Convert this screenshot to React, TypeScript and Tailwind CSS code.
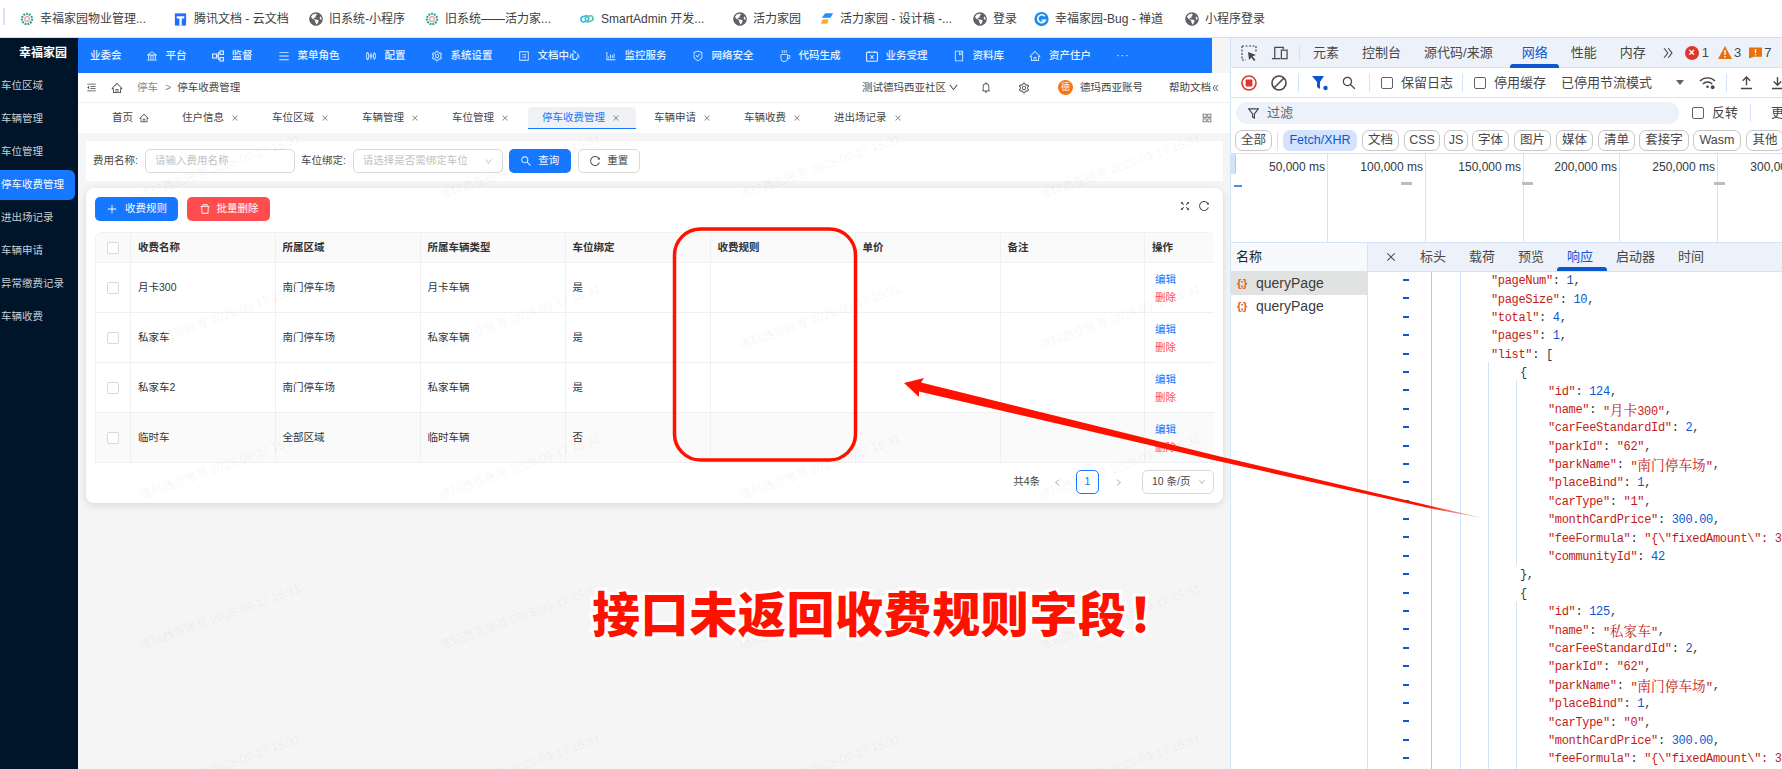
import React from 'react';
import {
  AiOutlineBank, AiOutlineMenu, AiOutlineSliders, AiOutlineSetting, AiOutlineProfile,
  AiOutlineBarChart, AiOutlineSafetyCertificate, AiOutlineCoffee, AiOutlineBook, AiOutlineHome,
  AiOutlineMenuFold, AiOutlineBell, AiOutlineDown, AiOutlineAppstore, AiOutlineClose, AiOutlineSearch, AiOutlineReload,
  AiOutlinePlus, AiOutlineDelete, AiOutlineFullscreen, AiOutlineLeft, AiOutlineRight, AiOutlineDoubleLeft, AiOutlineDoubleRight
} from 'react-icons/ai';
import { FaGlobeAmericas } from 'react-icons/fa';

const Flower = () => <svg viewBox="0 0 16 16" className="w-[14px] h-[16px] shrink-0">
    <circle cx="8" cy="8" r="5.8" fill="none" stroke="#2a9d8f" strokeWidth="2.6" strokeDasharray="2 1.2" />
    <circle cx="8" cy="8" r="2.6" fill="none" stroke="#e2a0a0" strokeWidth="1.4" />
  </svg>;
const Globe = () => <FaGlobeAmericas className="w-[14px] h-[14px] shrink-0 text-[#5f6368]" />;
const TencentDoc = () => <svg viewBox="0 0 16 16" className="w-[15px] h-[16px] shrink-0">
    <path d="M2 2h12v13H2z" fill="#1e6fff" />
    <path d="M4 5h8v2.4H9.3V15H6.8V7.4H4z" fill="#fff" />
  </svg>;
const SmartIcon = () => <svg viewBox="0 0 16 16" className="w-[16px] h-[14px] shrink-0">
    <rect x="1" y="5" width="9" height="6" rx="3" fill="none" stroke="#2db7f5" strokeWidth="1.8" transform="rotate(-20 5 8)" />
    <rect x="6" y="5" width="9" height="6" rx="3" fill="none" stroke="#52c4a0" strokeWidth="1.8" transform="rotate(-20 10 8)" />
  </svg>;
const DesignIcon = () => <svg viewBox="0 0 16 16" className="w-[14px] h-[15px] shrink-0">
    <path d="M6 2h9l-3 5H2z" fill="#1e8fff" />
    <path d="M3 9h7l-2 5H1z" fill="#ffa726" />
  </svg>;
const ZentaoIcon = () => <svg viewBox="0 0 16 16" className="w-[15px] h-[16px] shrink-0">
    <circle cx="8" cy="8" r="7.6" fill="#1a8cf0" />
    <path d="M11.5 5A4.2 4.2 0 1 0 12 9.5H8.2" fill="none" stroke="#fff" strokeWidth="1.8" />
  </svg>;

const SuperviseIcon = ({ className }: { className?: string }) => <svg viewBox="0 0 12 12" className={className} fill="none" stroke="currentColor" strokeWidth="1.1">
    <rect x="0.6" y="4" width="4" height="4" />
    <rect x="8" y="1" width="3.4" height="3.4" />
    <rect x="8" y="7.6" width="3.4" height="3.4" />
    <path d="M4.6 6H6.3V2.7H8M6.3 6v3.3H8" />
  </svg>;
const AcceptIcon = ({ className }: { className?: string }) => <svg viewBox="0 0 12 12" className={className} fill="none" stroke="currentColor" strokeWidth="1">
    <path d="M.6 2.2h10.8v9H.6zM3.2 1v2M8.8 1v2M4.4 5l3.2 4M7.6 5L4.4 9" />
  </svg>;

const bookmarks: [React.ReactNode, string, string][] = [
  [<Flower />, '幸福家园物业管理...', 'w-[153px]'],
  [<TencentDoc />, '腾讯文档 - 云文档', 'w-[136px]'],
  [<Globe />, '旧系统-小程序', 'w-[116px]'],
  [<Flower />, '旧系统——活力家...', 'w-[154px]'],
  [<SmartIcon />, 'SmartAdmin 开发...', 'w-[154px]'],
  [<Globe />, '活力家园', 'w-[87px]'],
  [<DesignIcon />, '活力家园 - 设计稿 -...', 'w-[153px]'],
  [<Globe />, '登录', 'w-[61px]'],
  [<ZentaoIcon />, '幸福家园-Bug - 禅道', 'w-[151px]'],
  [<Globe />, '小程序登录', 'w-[90px]'],
];

const sideItems = ['车位区域', '车辆管理', '车位管理', '停车收费管理', '进出场记录', '车辆申请', '异常缴费记录', '车辆收费'];

const navItems: [React.ElementType, string][] = [
  [AiOutlineBank, '平台'],
  [SuperviseIcon, '监督'],
  [AiOutlineMenu, '菜单角色'],
  [AiOutlineSliders, '配置'],
  [AiOutlineSetting, '系统设置'],
  [AiOutlineProfile, '文档中心'],
  [AiOutlineBarChart, '监控服务'],
  [AiOutlineSafetyCertificate, '网络安全'],
  [AiOutlineCoffee, '代码生成'],
  [AcceptIcon, '业务受理'],
  [AiOutlineBook, '资料库'],
  [AiOutlineHome, '资产住户'],
];

const tabs = ['住户信息', '车位区域', '车辆管理', '车位管理', '停车收费管理', '车辆申请', '车辆收费', '进出场记录'];

const rows = [
  ['月卡300', '南门停车场', '月卡车辆', '是'],
  ['私家车', '南门停车场', '私家车辆', '是'],
  ['私家车2', '南门停车场', '私家车辆', '是'],
  ['临时车', '全部区域', '临时车辆', '否'],
];

const gridCols = 'grid grid-cols-[35px_144.5px_145px_145px_145px_145px_145px_144.5px_69px]';
const cell = 'flex items-center px-[7px] border-r border-[#f0f0f0] last:border-r-0';

const Check = () => <span className="block w-[12px] h-[12px] rounded-[2px] border border-[#d9d9d9] bg-white" />;

const Table = () => <div className="mx-[9px] mt-[11px] w-[1119px] rounded-t-[6px] border-l border-t border-[#f0f0f0] text-[10.5px] text-[#333]">
    <div className={`${gridCols} h-[30px] bg-[#fafafa] border-b border-[#f0f0f0] font-bold`}>
      <div className={`${cell} justify-center`}><Check /></div>
      {['收费名称', '所属区域', '所属车辆类型', '车位绑定', '收费规则', '单价', '备注', '操作'].map(h => <div key={h} className={cell}>{h}</div>)}
    </div>
    {rows.map((r, i) => <div key={i} className={`${gridCols} h-[50px] border-b border-[#f0f0f0] ${i === 3 ? 'bg-[#fafafa]' : ''}`}>
        <div className={`${cell} justify-center`}><Check /></div>
        {r.map((v, j) => <div key={j} className={cell}>{v}</div>)}
        <div className={cell} />
        <div className={cell} />
        <div className={cell} />
        <div className={`${cell} flex-col !items-start justify-center pl-[10px] leading-[18px]`}>
          <span className="text-[#1677ff]">编辑</span>
          <span className="text-[#ff4d4f]">删除</span>
        </div>
      </div>)}
  </div>;

const App2 = () => <div className="relative flex w-[1230px] shrink-0 bg-[#f5f5f5]">
    <aside className="w-[78px] shrink-0 bg-[#001529] text-[10.5px] text-[#c9ced4]">
      <div className="h-[30px] pl-[19px] flex items-center text-[12px] font-bold text-white">幸福家园</div>
      <div className="mt-[3px] flex flex-col">
        {sideItems.map(s => <div key={s} className={`h-[30px] mb-[3px] mr-[3px] pl-px flex items-center ${s === '停车收费管理' ? 'bg-[#1677ff] text-white rounded-r-[6px]' : ''}`}>{s}</div>)}
      </div>
    </aside>
    <main className="flex-1 flex flex-col min-w-0">
      <nav className="w-[1134px] h-[35px] bg-[#1677ff] flex items-center pl-[12px] gap-[25px] text-[10.5px] font-medium text-white/90">
        <span className="mr-[-1px]">业委会</span>
        {navItems.map(([Icon, t]) => <span key={t} className="flex items-center gap-[8px]"><Icon className="w-[12px] h-[12px]" />{t}</span>)}
        <span className="tracking-[1px]">···</span>
      </nav>
      <div className="h-[30px] bg-white border-b border-[#f0f0f0] flex items-center pl-[8px] pr-[10px] text-[10.5px] text-[#444]">
        <AiOutlineMenuFold className="w-[11px] h-[11px]" />
        <AiOutlineHome className="ml-[14px] w-[12px] h-[12px]" />
        <span className="ml-[14px] text-[#888]">停车</span>
        <span className="ml-[7px] text-[#888]">&gt;</span>
        <span className="ml-[6px]">停车收费管理</span>
        <span className="ml-auto">测试德玛西亚社区</span>
        <AiOutlineDown className="ml-[2px] w-[11px] h-[11px]" />
        <AiOutlineBell className="ml-[21px] w-[12px] h-[13px]" />
        <AiOutlineSetting className="ml-[26px] w-[12px] h-[12px]" />
        <span className="ml-[28px] w-[15px] h-[15px] rounded-full bg-[#f5740f] text-white text-[9px] flex items-center justify-center">德</span>
        <span className="ml-[7px]">德玛西亚账号</span>
        <span className="ml-[26px]">帮助文档</span>
        <AiOutlineDoubleLeft className="w-[9px] h-[10px]" />
      </div>
      <div className="h-[30px] bg-white flex items-center text-[10.5px] text-[#444] pl-[34px] pr-[17px]">
        <span className="flex items-center gap-[6px] w-[70px]">首页<AiOutlineHome className="w-[10px] h-[10px]" /></span>
        {tabs.map(t => {
          const active = t === '停车收费管理';
          return <span key={t} className={`flex items-center gap-[7px] h-[22px] ${active ? 'bg-[#eff1f5] text-[#1677ff] border-b border-[#1677ff] rounded-t-[4px] pl-[14px] pr-[16px] ml-[-14px] mr-[18px]' : 'mr-[33px]'}`}>
              {t}<AiOutlineClose className="w-[8px] h-[8px] text-[#777]" />
            </span>;
        })}
        <AiOutlineAppstore className="ml-auto w-[12px] h-[12px] text-[#666]" />
      </div>
      <div className="mt-[8px] ml-[8px] w-[1137px] h-[40px] bg-white flex items-center pl-[7px] text-[10.5px] text-[#444]">
        <span className="mr-[7px]">费用名称:</span>
        <span className="w-[150px] h-[24px] rounded-[5px] border border-[#d9d9d9] flex items-center px-[9px] text-[#bfbfbf]">请输入费用名称</span>
        <span className="ml-[6px] mr-[7px]">车位绑定:</span>
        <span className="w-[150px] h-[24px] rounded-[5px] border border-[#d9d9d9] flex items-center px-[9px] text-[#bfbfbf]">请选择是否需绑定车位<AiOutlineDown className="ml-auto w-[9px] h-[9px]" /></span>
        <span className="ml-[6px] w-[62px] h-[24px] rounded-[5px] bg-[#1677ff] text-white flex items-center justify-center gap-[6px]"><AiOutlineSearch className="w-[12px] h-[12px]" />查询</span>
        <span className="ml-[7px] w-[62px] h-[24px] rounded-[5px] border border-[#d9d9d9] bg-white flex items-center justify-center gap-[6px]"><AiOutlineReload className="w-[12px] h-[12px]" />重置</span>
      </div>
      <section className="mt-[7px] ml-[8px] w-[1137px] h-[315px] bg-white rounded-[8px] shadow-[0_2px_8px_rgba(0,0,0,0.12)] pt-[9px]">
        <div className="flex items-center pl-[9px] pr-[13px] text-[10.5px]">
          <span className="w-[83px] h-[24px] rounded-[5px] bg-[#1677ff] text-white flex items-center justify-center gap-[7px]"><AiOutlinePlus className="w-[12px] h-[12px]" />收费规则</span>
          <span className="ml-[9px] w-[83px] h-[24px] rounded-[5px] bg-[#ff4d4f] text-white flex items-center justify-center gap-[6px]"><AiOutlineDelete className="w-[12px] h-[12px]" />批量删除</span>
          <AiOutlineFullscreen className="ml-auto self-start mt-[3px] w-[12px] h-[12px] text-[#444]" />
          <AiOutlineReload className="ml-[7px] self-start mt-[3px] w-[12px] h-[12px] text-[#444]" />
        </div>
        <Table />
        <div className="mt-[7px] pr-[9px] flex items-center justify-end text-[10.5px] text-[#444] h-[24px]">
          <span>共4条</span>
          <AiOutlineLeft className="ml-[13px] w-[9px] h-[9px] text-[#aaa]" />
          <span className="ml-[14px] w-[23px] h-[24px] rounded-[5px] border border-[#1677ff] text-[#1677ff] flex items-center justify-center">1</span>
          <AiOutlineRight className="ml-[15px] w-[9px] h-[9px] text-[#aaa]" />
          <span className="ml-[19px] w-[72px] h-[24px] rounded-[5px] border border-[#d9d9d9] flex items-center pl-[9px] pr-[7px]">10 条/页<AiOutlineDown className="ml-auto w-[8px] h-[8px] text-[#aaa]" /></span>
        </div>
      </section>
    </main>
    <Watermarks />
  </div>;

const Watermarks = () => <div className="absolute left-[78px] top-0 w-[1152px] h-[731px] overflow-hidden pointer-events-none">
    <div className="ml-[-8px] mt-[54px] grid grid-cols-[repeat(4,300px)] auto-rows-[150px] w-[1200px]">
      {Array.from({ length: 20 }).map((_, i) => <div key={i} className="flex items-center justify-center">
          <span className="rotate-[-20deg] whitespace-nowrap text-[12px] text-black/[0.06]">德玛西亚账号 2025-09-17 15:31</span>
        </div>)}
    </div>
  </div>;

const Sep = ({ className = '' }: { className?: string }) => <span className={`w-px h-[18px] bg-[#d3e3fd] shrink-0 ${className}`} />;
const DtCheck = () => <span className="block w-[12px] h-[12px] rounded-[2px] border border-[#5f6368] shrink-0" />;

const chips: [string, string][] = [
  ['文档', 'w-[37px] mr-[5px]'], ['CSS', 'w-[36px] mr-[4px]'], ['JS', 'w-[24px] mr-[4px]'], ['字体', 'w-[37px] mr-[5px]'], ['图片', 'w-[37px] mr-[5px]'],
  ['媒体', 'w-[37px] mr-[5px]'], ['清单', 'w-[37px] mr-[4px]'], ['套接字', 'w-[50px] mr-[4px]'], ['Wasm', 'w-[48px] mr-[5px]'], ['其他', 'w-[38px]'],
];

const gridLabels: [string, string][] = [
  ['50,000 ms', 'left-[96px]'], ['100,000 ms', 'left-[194px]'], ['150,000 ms', 'left-[292px]'],
  ['200,000 ms', 'left-[388px]'], ['250,000 ms', 'left-[486px]'], ['300,000 ms', 'left-[584px]'],
];

type Part = string | { n: string };
const q = (s: string) => `"${s}"`;
const code: [number, Part[]][] = [
  [0, [q('pageNum'), ': ', { n: '1' }, ',']],
  [0, [q('pageSize'), ': ', { n: '10' }, ',']],
  [0, [q('total'), ': ', { n: '4' }, ',']],
  [0, [q('pages'), ': ', { n: '1' }, ',']],
  [0, [q('list'), ': [']],
  [1, ['{']],
  [2, [q('id'), ': ', { n: '124' }, ',']],
  [2, [q('name'), ': ', q('月卡300'), ',']],
  [2, [q('carFeeStandardId'), ': ', { n: '2' }, ',']],
  [2, [q('parkId'), ': ', q('62'), ',']],
  [2, [q('parkName'), ': ', q('南门停车场'), ',']],
  [2, [q('placeBind'), ': ', { n: '1' }, ',']],
  [2, [q('carType'), ': ', q('1'), ',']],
  [2, [q('monthCardPrice'), ': ', { n: '300.00' }, ',']],
  [2, [q('feeFormula'), ': ', '"{\\"fixedAmount\\": 3']],
  [2, [q('communityId'), ': ', { n: '42' }]],
  [1, ['},']],
  [1, ['{']],
  [2, [q('id'), ': ', { n: '125' }, ',']],
  [2, [q('name'), ': ', q('私家车'), ',']],
  [2, [q('carFeeStandardId'), ': ', { n: '2' }, ',']],
  [2, [q('parkId'), ': ', q('62'), ',']],
  [2, [q('parkName'), ': ', q('南门停车场'), ',']],
  [2, [q('placeBind'), ': ', { n: '1' }, ',']],
  [2, [q('carType'), ': ', q('0'), ',']],
  [2, [q('monthCardPrice'), ': ', { n: '300.00' }, ',']],
  [2, [q('feeFormula'), ': ', '"{\\"fixedAmount\\": 3']],
];

// CJK runs stay at the wider size, latin uses the narrow mono
const renderStr = (s: string) => s.split(/([\u4e00-\u9fa5]+)/).map((p, i) => /[\u4e00-\u9fa5]/.test(p)
  ? <span key={i} className="text-[13.7px] tracking-normal font-['Noto_Serif_CJK_SC','Noto_Sans_CJK_SC',sans-serif]">{p}</span>
  : p);

const CodeLine = ({ indent, parts }: { indent: number; parts: Part[] }) => <div className={`h-[18.4px] flex items-center whitespace-pre ${indent === 0 ? 'pl-[123px]' : indent === 1 ? 'pl-[152px]' : 'pl-[180px]'}`}>
    {parts.map((p, i) => {
      if (typeof p !== 'string') return <span key={i} className="text-[#0b57d0]">{p.n}</span>;
      const punct = /^[:,\s\[\]{}]+$/.test(p);
      return <span key={i} className={punct ? 'text-[#303942]' : 'text-[#c41a16]'}>{renderStr(p)}</span>;
    })}
  </div>;

const DevTools = () => <div className="flex-1 min-w-0 relative overflow-hidden bg-white border-l border-[#d3e3fd] text-[#474747] text-[13px] whitespace-nowrap">
    <div className="relative h-[30px] bg-[#edf2fa] border-b border-[#d3e3fd] flex items-center pl-[10px]">
      <svg viewBox="0 0 16 16" className="w-[16px] h-[16px] shrink-0" fill="none" stroke="#474747" strokeWidth="1.2">
        <path d="M1 1h14M1 1v14M1 15h4M15 1v6" strokeDasharray="2 1.5" />
        <path d="M7 7l8 3-3.5 1.2L14.5 15 13 16l-2.6-3.5L8 15z" fill="#474747" stroke="none" />
      </svg>
      <svg viewBox="0 0 18 16" className="ml-[14px] w-[17px] h-[16px] shrink-0" fill="none" stroke="#474747" strokeWidth="1.3">
        <path d="M4 14V2h9v2M1 14h9" />
        <rect x="11" y="5" width="6" height="9" />
      </svg>
      <Sep className="ml-[11px]" />
      <span className="ml-[13px]">元素</span>
      <span className="ml-[23px]">控制台</span>
      <span className="ml-[23px]">源代码/来源</span>
      <span className="ml-[29px] text-[#0b57d0]">网络</span>
      <span className="ml-[23px]">性能</span>
      <span className="ml-[23px]">内存</span>
      <AiOutlineDoubleRight className="ml-[15px] w-[14px] h-[14px] shrink-0" />
      <span className="ml-[10px] w-[14px] h-[14px] shrink-0 rounded-full bg-[#dc362e] text-white text-[11px] leading-none flex items-center justify-center font-bold">×</span>
      <span className="ml-[3px]">1</span>
      <svg viewBox="0 0 14 13" className="ml-[9px] w-[14px] h-[13px] shrink-0"><path d="M7 0l7 13H0z" fill="#e8710a" /><path d="M6.3 4h1.4v5H6.3zM6.3 10h1.4v1.4H6.3z" fill="#fff" /></svg>
      <span className="ml-[2px]">3</span>
      <svg viewBox="0 0 14 13" className="ml-[8px] w-[13px] h-[13px] shrink-0"><path d="M0 1h14v10H5l-5 2z" fill="#e8710a" /><path d="M6.3 3h1.4v4H6.3zM6.3 8h1.4v1.4H6.3z" fill="#fff" /></svg>
      <span className="ml-[2px]">7</span>
      <span className="absolute left-[279px] top-[26px] w-[49px] h-[4px] rounded-t-[3px] bg-[#0b57d0]" />
    </div>
    <div className="h-[30px] border-b border-[#d3e3fd] flex items-center pl-[10px]">
      <svg viewBox="0 0 16 16" className="w-[16px] h-[16px] shrink-0"><circle cx="8" cy="8" r="7" fill="none" stroke="#dc362e" strokeWidth="1.6" /><rect x="4.6" y="4.6" width="6.8" height="6.8" rx="1" fill="#dc362e" /></svg>
      <svg viewBox="0 0 16 16" className="ml-[14px] w-[16px] h-[16px] shrink-0" fill="none" stroke="#474747" strokeWidth="1.6"><circle cx="8" cy="8" r="7" /><path d="M3 13L13 3" /></svg>
      <Sep className="ml-[11px]" />
      <svg viewBox="0 0 16 16" className="ml-[13px] w-[16px] h-[16px] shrink-0"><path d="M0 1h12L8 7v7l-3-2V7z" fill="#0b57d0" /><circle cx="13.5" cy="13" r="2.2" fill="#0b57d0" /></svg>
      <AiOutlineSearch className="ml-[13px] w-[16px] h-[16px] shrink-0" />
      <Sep className="ml-[12px]" />
      <span className="ml-[11px] shrink-0"><DtCheck /></span>
      <span className="ml-[8px] shrink-0">保留日志</span>
      <Sep className="ml-[9px]" />
      <span className="ml-[11px] shrink-0"><DtCheck /></span>
      <span className="ml-[8px] shrink-0">停用缓存</span>
      <span className="ml-[15px] shrink-0">已停用节流模式</span>
      <span className="ml-[24px] w-0 h-0 shrink-0 border-x-[4.5px] border-x-transparent border-t-[5px] border-t-[#5f6368]" />
      <svg viewBox="0 0 18 14" className="ml-[15px] w-[17px] h-[14px] shrink-0" fill="none" stroke="#474747" strokeWidth="1.5"><path d="M1 5a11 11 0 0 1 16 0M4 8a7 7 0 0 1 10 0" /><circle cx="9" cy="11" r="1.4" fill="#474747" stroke="none" /><circle cx="14.5" cy="11.5" r="2" fill="#474747" stroke="none" /></svg>
      <Sep className="ml-[10px]" />
      <svg viewBox="0 0 14 16" className="ml-[13px] w-[13px] h-[15px] shrink-0" fill="none" stroke="#474747" strokeWidth="1.5"><path d="M7 11V2M3 6l4-4 4 4M1 14.5h12" /></svg>
      <svg viewBox="0 0 14 16" className="ml-[18px] w-[13px] h-[15px] shrink-0" fill="none" stroke="#474747" strokeWidth="1.5"><path d="M7 2v9M3 7l4 4 4-4M1 14.5h12" /></svg>
    </div>
    <div className="h-[30px] flex items-center pl-[5px]">
      <div className="w-[443px] shrink-0 h-[22px] rounded-full bg-[#edf2fa] flex items-center pl-[12px] text-[#5f6368]">
        <svg viewBox="0 0 12 12" className="w-[11px] h-[11px]" fill="none" stroke="#474747" strokeWidth="1.3"><path d="M.7 1h10.6L7 6.5V11L5 10V6.5z" /></svg>
        <span className="ml-[8px]">过滤</span>
      </div>
      <span className="ml-[13px]"><DtCheck /></span>
      <span className="ml-[8px]">反转</span>
      <Sep className="ml-[12px]" />
      <span className="ml-[20px]">更多过滤条件</span>
    </div>
    <div className="h-[26px] border-b border-[#d3e3fd] flex items-center pl-[4px] text-[12.5px]">
      <span className="w-[37px] h-[21px] rounded-[7px] border border-[#c7c7c7] flex items-center justify-center shrink-0">全部</span>
      <Sep className="ml-[5px]" />
      <span className="ml-[5px] w-[74px] h-[21px] rounded-[7px] bg-[#d3e3fd] text-[#0b57d0] flex items-center justify-center shrink-0 mr-[5px]">Fetch/XHR</span>
      {chips.map(([t, c]) => <span key={t} className={`${c} h-[21px] rounded-[7px] border border-[#c7c7c7] flex items-center justify-center shrink-0`}>{t}</span>)}
    </div>
    <div className="relative h-[89px] border-b border-[#d3e3fd] text-[12px] text-[#303942]">
      {gridLabels.map(([t, c]) => <div key={t} className={`${c} absolute top-0 bottom-0 w-px bg-[#d3e3fd]`}>
          <span className="absolute right-[3px] top-[4px]">{t}</span>
        </div>)}
      <span className="absolute left-[170px] top-[28px] w-[11px] h-[3px] bg-[#bdbdbd]" />
      <span className="absolute left-[291px] top-[28px] w-[11px] h-[3px] bg-[#bdbdbd]" />
      <span className="absolute left-[483px] top-[28px] w-[11px] h-[3px] bg-[#bdbdbd]" />
      <span className="absolute left-[3px] top-[31px] w-[8px] h-[2px] bg-[#4d8df6]" />
      <span className="absolute left-0 top-0 w-[5px] h-[20px] bg-[#d3e3fd] rounded-r-[2px] border-r border-[#a8c7fa]" />
    </div>
    <div className="flex h-[527px]">
      <div className="w-[137px] shrink-0 border-r border-[#d3e3fd]">
        <div className="h-[29px] bg-[#f8f9fd] border-b border-[#d3e3fd] flex items-center pl-[5px] text-[13px] text-[#1f1f1f]">名称</div>
        {[0, 1].map(i => <div key={i} className={`h-[23px] flex items-center pl-[6px] gap-[4px] text-[14px] text-[#3c3c3c] ${i === 0 ? 'bg-[#e0e3e1]' : ''}`}>
            <span className="w-[15px] text-[11px] font-bold text-[#e0602a] tracking-[-1px]">{'{;}'}</span>queryPage
          </div>)}
      </div>
      <div className="flex-1 min-w-0 relative">
        <div className="relative h-[29px] bg-[#edf2fa] border-b border-[#d3e3fd] flex items-center">
          <AiOutlineClose className="ml-[17px] w-[12px] h-[12px]" />
          <span className="ml-[23px]">标头</span>
          <span className="ml-[23px]">载荷</span>
          <span className="ml-[23px]">预览</span>
          <span className="ml-[23px] text-[#0b57d0]">响应</span>
          <span className="ml-[23px]">启动器</span>
          <span className="ml-[23px]">时间</span>
          <span className="absolute left-[189px] bottom-0 w-[50px] h-[4px] rounded-t-[3px] bg-[#0b57d0]" />
        </div>
        <div className="relative h-[498px] overflow-hidden font-['Liberation_Mono',monospace] text-[12px] tracking-[-0.33px]">
          <span className="absolute left-[63px] top-0 bottom-0 w-px bg-[#a8c7fa]" />
          <span className="absolute left-[92px] top-0 bottom-0 w-px bg-[#d3e3fd]" />
          <span className="absolute left-[120px] top-[90px] bottom-0 w-px bg-[#d3e3fd]" />
          <span className="absolute left-[148px] top-[108px] h-[185px] w-px bg-[#d3e3fd]" />
          <span className="absolute left-[148px] top-[330px] bottom-0 w-px bg-[#d3e3fd]" />
          {code.map(([ind, parts], i) => <div key={i} className="relative">
              <span className="absolute left-[35px] top-[7px] w-[6px] h-[2px] bg-[#0b57d0]" />
              <CodeLine indent={ind} parts={parts} />
            </div>)}
        </div>
      </div>
    </div>
  </div>;

const Annotations = () => <>
    <svg width="1782" height="769" viewBox="0 0 1782 769" className="absolute left-0 top-0 pointer-events-none">
      <defs>
        <linearGradient id="tail" gradientUnits="userSpaceOnUse" x1="1425" y1="0" x2="1490" y2="0">
          <stop offset="0" stopColor="#ff1100" />
          <stop offset="1" stopColor="#ff1100" stopOpacity="0" />
        </linearGradient>
      </defs>
      <rect x="674.5" y="229" width="181" height="231" rx="26" fill="none" stroke="#ff1100" strokeWidth="3.5" />
      <path d="M904 383L924 378L921 382.5L1220 456.5L1431 506L1490 519.5L1431 508.5L1220 461.5L919 391.5L919 397Z" fill="url(#tail)" />
    </svg>
    <div className="absolute left-[592px] top-[582px] whitespace-nowrap text-[48px] leading-[58px] tracking-[0.6px] font-black text-[#ff1100] [paint-order:stroke_fill] [-webkit-text-stroke:6px_white] font-['Noto_Sans_CJK_SC',sans-serif]">
      接口未返回收费规则字段<span className="ml-[2px]">！</span>
    </div>
  </>;

export default function App() {
  return <div className="relative w-[1782px] h-[769px] overflow-hidden bg-white font-['Liberation_Sans','Noto_Sans_CJK_SC',sans-serif]">
      <div className="h-[38px] border-b border-[#dcdcdc] flex items-center pl-[20px] text-[12px] text-[#3c4043] whitespace-nowrap">
        <span className="absolute left-[3px] top-[8px] w-[2px] h-[17px] bg-[#d3e3fd]" />
        {bookmarks.map(([icon, label, w], i) => <span key={i} className={`flex items-center gap-[6px] ${w}`}>{icon}{label}</span>)}
      </div>
      <div className="flex h-[731px]">
        <App2 />
        <DevTools />
      </div>
      <Annotations />
    </div>;
}
